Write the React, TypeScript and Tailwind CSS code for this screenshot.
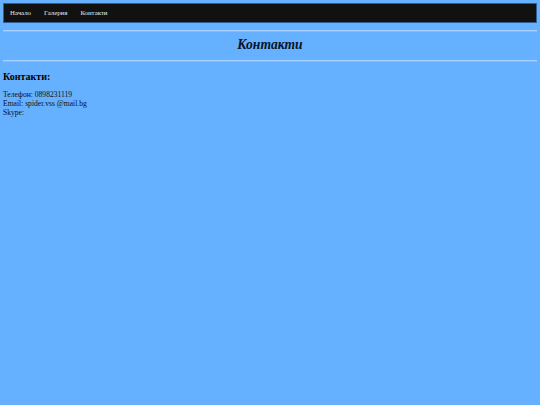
export default function App() {
  const links = ["Начало", "Галерия", "Контакти"];
  return (
    <div className="min-h-[405px] w-full bg-[#65b0ff] px-[3px] pt-[3px] font-['Liberation_Serif',serif] text-black">
      <nav className="flex h-[20px] items-center gap-[13px] border border-[#2f5f95] bg-[#111111] px-[6px] pt-[1px] text-[6.8px] text-[#e8e8e8]">
        {links.map((l) => (
          <span key={l}>{l}</span>
        ))}
      </nav>
      <div className="mt-[7px] border-t border-t-[#a8d2ff] border-b border-b-[#7cbcff]" />
      <h1 className="flex h-[28px] items-center justify-center pb-[2px] text-[13.6px] font-bold italic text-[#0b1426]">
        Контакти
      </h1>
      <div className="border-t border-t-[#a8d2ff] border-b border-b-[#7cbcff]" />
      <h3 className="mt-[9px] text-[10px] font-bold leading-[12px]">Контакти:</h3>
      <div className="mt-[7px] text-[7.6px] leading-[9px] text-[#111]">
        <p>Телефон: 0898231119</p>
        <p>Email: spider.vss @mail.bg</p>
        <p>Skype:</p>
      </div>
    </div>
  );
}
